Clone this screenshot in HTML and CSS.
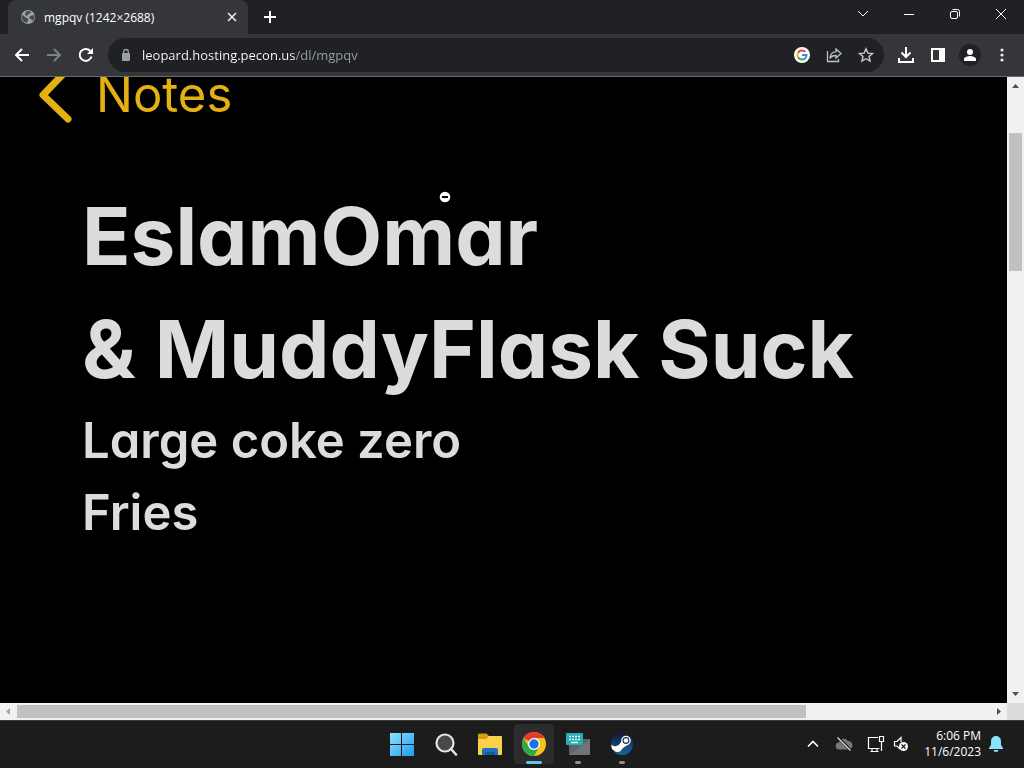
FILE: index.html
```html
<!DOCTYPE html>
<html lang="en">
<head>
  <meta charset="UTF-8">
  <title>mgpqv (1242×2688)</title>
  <link rel="stylesheet" href="styles.css">
</head>
<body>
  <header class="tab-strip">
    <div class="tab">
      <svg class="globe" width="16" height="16" viewBox="0 0 16 16">
        <circle cx="8" cy="8" r="7" fill="#9aa0a6"/>
        <path d="M2 6l2 1 2 2 2 .5v2L6.500 14 3 12 1.500 8zM7 2l4 .5-1 2-2 .5L7 7 5 6l.5-2zM10 7l4-1 .5 3-2 3-1.500-2-2-1z" fill="#45484c"/>
      </svg>
      <span class="tab-title">mgpqv (1242×2688)</span>
      <button class="tab-close" aria-label="Close tab">
        <svg width="10" height="10" viewBox="0 0 10 10"><path d="M1 1l8 8M9 1L1 9" stroke="#e8eaed" stroke-width="1.600"/></svg>
      </button>
    </div>
    <button class="new-tab" aria-label="New tab">
      <svg width="14" height="14" viewBox="0 0 14 14"><path d="M7 1v12M1 7h12" stroke="#fff" stroke-width="2"/></svg>
    </button>
    <div class="window-buttons">
      <button aria-label="Search tabs"><svg width="12" height="12" viewBox="0 0 12 12"><path d="M1 3l5 5 5-5"/></svg></button>
      <button aria-label="Minimize"><svg width="12" height="12" viewBox="0 0 12 12"><path d="M1 6.500h10"/></svg></button>
      <button aria-label="Restore"><svg width="12" height="12" viewBox="0 0 12 12"><rect x="1.500" y="3.500" width="7" height="7" rx="1.500"/><path d="M3.500 1.500H8.500a2 2 0 0 1 2 2V8.500"/></svg></button>
      <button aria-label="Close"><svg width="12" height="12" viewBox="0 0 12 12"><path d="M1 1l10 10M11 1L1 11"/></svg></button>
    </div>
  </header>

  <div class="toolbar">
    <button aria-label="Back"><svg width="16" height="16" viewBox="0 0 16 16"><path d="M15 8H2M8 2L2 8l6 6" fill="none" stroke="#fff" stroke-width="2"/></svg></button>
    <button aria-label="Forward"><svg width="16" height="16" viewBox="0 0 16 16"><path d="M1 8h13M8 2l6 6-6 6" fill="none" stroke="#7d8084" stroke-width="2"/></svg></button>
    <button aria-label="Reload"><svg width="16" height="16" viewBox="0 0 16 16"><path d="M13.500 9.500A6 6 0 1 1 12.300 4" fill="none" stroke="#fff" stroke-width="2"/><path d="M15 1v6H9z" fill="#fff"/></svg></button>
    <div class="omnibox">
      <svg class="lock" width="10" height="14" viewBox="0 0 10 14"><rect x="1" y="5" width="8" height="8" rx="1" fill="#9aa0a6"/><path d="M2.700 6V3.800a2.300 2.300 0 0 1 4.600 0V6" fill="none" stroke="#9aa0a6" stroke-width="1.400"/></svg>
      <input class="url" type="text" aria-label="Address" value="leopard.hosting.pecon.us/dl/mgpqv">
      <button aria-label="Search with Google">
        <svg width="16" height="16" viewBox="0 0 16 16">
          <circle cx="8" cy="8" r="8" fill="#fff"/>
          <g fill="none" stroke-width="2">
            <path d="M4.100 5.700A4.500 4.500 0 0 1 11.300 4.900" stroke="#ea4335"/>
            <path d="M4.100 5.700A4.500 4.500 0 0 0 4.100 10.300" stroke="#fbbc05"/>
            <path d="M4.100 10.300A4.500 4.500 0 0 0 11 11.400" stroke="#34a853"/>
            <path d="M11 11.400A4.500 4.500 0 0 0 12.500 8H8" stroke="#4285f4"/>
          </g>
        </svg>
      </button>
      <button aria-label="Share">
        <svg width="16" height="16" viewBox="0 0 16 16" fill="none" stroke="#bdc1c6" stroke-width="1.300"><path d="M1.500 4v10.500h11V12M10 2l5 4.500-5 4.500V8.500C7 8.500 5 9.500 3.800 11.500 4.200 7.500 6.500 5 10 4.600z"/></svg>
      </button>
      <button aria-label="Bookmark">
        <svg width="16" height="16" viewBox="0 0 16 16"><path d="M8 1.800l1.900 4.300 4.600.4-3.500 3 1.100 4.600L8 11.700l-4.100 2.400L5 9.500l-3.500-3 4.600-.4z" fill="none" stroke="#c8cbcf" stroke-width="1.400"/></svg>
      </button>
    </div>
    <button aria-label="Downloads"><svg width="18" height="18" viewBox="0 0 18 18" fill="none" stroke="#fff" stroke-width="2"><path d="M9 1v9M4.500 6.500L9 11l4.500-4.500M2 12v4h14v-4"/></svg></button>
    <button aria-label="Side panel"><svg width="16" height="16" viewBox="0 0 16 16"><path d="M1 1h14v14H1zM3 3v10h6V3z" fill="#fff" fill-rule="evenodd"/></svg></button>
    <button aria-label="Profile"><svg width="22" height="22" viewBox="0 0 22 22"><circle cx="11" cy="11" r="11" fill="#202124"/><circle cx="11" cy="8" r="3" fill="#fff"/><path d="M5 17v-2c0-2 4-3 6-3s6 1 6 3v2z" fill="#fff"/></svg></button>
    <button aria-label="Menu"><svg width="4" height="14" viewBox="0 0 4 14" fill="#e8eaed"><circle cx="2" cy="2" r="1.600"/><circle cx="2" cy="7" r="1.600"/><circle cx="2" cy="12" r="1.600"/></svg></button>
  </div>

  <div class="viewport">
    <main class="note">
      <a class="back-link" href="#">
        <svg width="36" height="46" viewBox="0 0 36 46"><path d="M30 -8L5 18l25 24" fill="none" stroke="#e3b112" stroke-width="7" stroke-linecap="round" stroke-linejoin="round"/></svg>
        <span>Notes</span>
      </a>
      <h1>EslamOmar<br>&amp; MuddyFlask Suck</h1>
      <p>Large coke zero</p>
      <p>Fries</p>
      <svg class="cursor" width="12" height="12" viewBox="0 0 12 12"><circle cx="6" cy="6" r="5.300" fill="#fff"/><path d="M3 6h6" stroke="#000" stroke-width="2"/></svg>
    </main>
    <div class="scrollbar vertical">
      <svg width="17" height="17" viewBox="0 0 17 17"><path d="M5 11h7L8.500 7z" fill="#505050"/></svg>
      <div class="space-above"></div>
      <div class="thumb"></div>
      <div class="space-below"></div>
      <svg width="17" height="17" viewBox="0 0 17 17"><path d="M5 6h7l-3.500 4z" fill="#505050"/></svg>
    </div>
    <div class="scrollbar horizontal">
      <svg width="17" height="17" viewBox="0 0 17 17"><path d="M10 5v7L6 8.500z" fill="#a3a3a3"/></svg>
      <div class="thumb"></div>
      <div class="space-after"></div>
      <svg width="17" height="17" viewBox="0 0 17 17"><path d="M7 5v7l4-3.500z" fill="#505050"/></svg>
    </div>
    <div class="corner"></div>
  </div>

  <footer class="taskbar">
    <nav class="apps">
      <button aria-label="Start">
        <svg width="24" height="24" viewBox="0 0 24 24">
          <defs><linearGradient id="win" x1="0" y1="0" x2="1" y2="1"><stop offset="0" stop-color="#8fe4fd"/><stop offset="1" stop-color="#1d9bf0"/></linearGradient></defs>
          <path d="M0 1h11v11H0zM12 1h12v11H12zM0 13h11v11H0zM12 13h12v11H12z" fill="url(#win)"/>
        </svg>
      </button>
      <button aria-label="Search">
        <svg width="24" height="24" viewBox="0 0 24 24"><circle cx="11" cy="11" r="8.500" fill="#46484b" stroke="#e4e4e4" stroke-width="2.200"/><path d="M17 17l5 5.500" stroke="#e4e4e4" stroke-width="2.600" stroke-linecap="round"/></svg>
      </button>
      <button aria-label="File Explorer">
        <svg width="24" height="24" viewBox="0 0 24 24">
          <path d="M0 3a1.500 1.500 0 0 1 1.500-1.500h7L11 4v5H0z" fill="#d99a14"/>
          <path d="M0 7h8l3-3h12a1 1 0 0 1 1 1v17a1 1 0 0 1-1 1H1a1 1 0 0 1-1-1z" fill="#fbd04b"/>
          <path d="M4 23v-5a2 2 0 0 1 2-2h12a2 2 0 0 1 2 2v5z" fill="#1a73c4"/>
          <path d="M7 20h10v3H7z" fill="#155a9c"/>
        </svg>
      </button>
      <button class="active running" aria-label="Google Chrome">
        <svg width="24" height="24" viewBox="0 0 24 24">
          <circle cx="12" cy="12" r="12" fill="#fbc116"/>
          <path d="M12 12L1.600 6A12 12 0 0 1 22.400 6H12z" fill="#e33b2e"/>
          <path d="M1.600 6A12 12 0 0 0 12 24l5.200-9L12 12 6.800 15z" fill="#2da94f"/>
          <circle cx="12" cy="12" r="6" fill="#fff"/>
          <circle cx="12" cy="12" r="4.700" fill="#1a73e8"/>
        </svg>
      </button>
      <button class="running" aria-label="Touch keyboard">
        <svg width="26" height="24" viewBox="0 0 26 24">
          <rect x="4" y="7" width="21" height="16" rx="1" fill="#606368"/>
          <path d="M4 23L25 7v15a1 1 0 0 1-1 1z" fill="#707378"/>
          <rect x="1" y="1" width="17" height="12" rx="1" fill="#28acb7"/>
          <path d="M4 4.500h12M4 7.500h12" stroke="#e8ffff" stroke-width="1.600" stroke-dasharray="2 1"/>
          <path d="M6 10.500h7" stroke="#e8ffff" stroke-width="1.400"/>
        </svg>
      </button>
      <button class="running" aria-label="Steam">
        <svg width="24" height="24" viewBox="0 0 24 24">
          <defs><linearGradient id="steam" x1="0" y1="0" x2="0" y2="1"><stop offset="0" stop-color="#10183a"/><stop offset="1" stop-color="#1668a0"/></linearGradient></defs>
          <circle cx="12" cy="12" r="11" fill="url(#steam)"/>
          <path d="M1 13l6 2 5-6 7 3-6 4-3 3.500-4 .5-4-3z" fill="#fff"/>
          <circle cx="16" cy="8.500" r="4.800" fill="#fff"/>
          <circle cx="16" cy="8.500" r="2.900" fill="none" stroke="#1b2d4e" stroke-width="1.100"/>
          <circle cx="8" cy="16.500" r="3" fill="#fff"/>
        </svg>
      </button>
    </nav>
    <div class="tray">
      <button class="tray-more" aria-label="Show hidden icons"><svg width="12" height="12" viewBox="0 0 12 12"><path d="M1 8.500l5-5 5 5" fill="none" stroke="#fff" stroke-width="1.600"/></svg></button>
      <svg class="cloud" width="18" height="16" viewBox="0 0 18 16"><path d="M4.500 13.500a3.500 3.500 0 0 1-.5-7 5 5 0 0 1 9-1.500 4.300 4.300 0 0 1 1 8.500z" fill="#76787a"/><path d="M3 1.500l13 13" stroke="#1c1c1c" stroke-width="3"/><path d="M2.500 1.500l13 13" stroke="#ddd" stroke-width="1.300"/></svg>
      <svg class="network" width="18" height="18" viewBox="0 0 18 18" fill="none" stroke="#fff" stroke-width="1.200"><path d="M11 2.500H1.500v11h11M5 13.500v3M10 13.500v3M3.500 16.500h8M12.500 1.500h4v5h-4zM14.500 6.500V16"/></svg>
      <svg class="sound" width="16" height="16" viewBox="0 0 16 16"><path d="M7 13L4 10H1.500V5.500H4L8 1.500V6" fill="none" stroke="#fff" stroke-width="1.200"/><circle cx="10.500" cy="10.500" r="4.500" fill="#fff"/><path d="M8.500 8.500l4 4M12.500 8.500l-4 4" stroke="#1c1c1c" stroke-width="1.200"/></svg>
      <div class="clock">
        <time>6:06 PM</time>
        <time datetime="2023-11-06">11/6/2023</time>
      </div>
      <svg class="bell" width="14" height="16" viewBox="0 0 14 16"><path d="M7 0a5 5 0 0 1 5 5v4l2 3v1H0v-1l2-3V5a5 5 0 0 1 5-5zM4.500 14h5a2.500 2 0 0 1-5 0z" fill="#8be3fb"/></svg>
    </div>
  </footer>
</body>
</html>
```

FILE: styles.css
```css
* {
  box-sizing: border-box;
}
body {
  margin: 0;
  height: 100vh;
  display: flex;
  flex-direction: column;
  overflow: hidden;
  background: #202124;
  color: #fff;
  font-family: "Open Sans", "Noto Sans", sans-serif;
}
svg {
  display: block;
  flex: none;
}
button {
  display: flex;
  align-items: center;
  justify-content: center;
  padding: 0;
  border: none;
  background: none;
  color: inherit;
}

/* tabs */
.tab-strip {
  display: flex;
  height: 34px;
  padding-left: 8px;
}
.tab {
  display: flex;
  align-items: center;
  width: 240px;
  padding: 0 8px 0 12px;
  border-radius: 8px 8px 0 0;
  background: #35363a;
  font-size: 12px;
}
.tab-title {
  flex: 1;
  margin-left: 8px;
  white-space: nowrap;
}
.tab-close {
  width: 16px;
  height: 16px;
}
.new-tab {
  width: 28px;
  margin-left: 8px;
}
.window-buttons {
  display: flex;
  margin-left: auto;
}
.window-buttons button {
  width: 46px;
  height: 28px;
}
.window-buttons svg {
  fill: none;
  stroke: #fff;
}

/* toolbar */
.toolbar {
  display: flex;
  align-items: center;
  height: 43px;
  padding: 0 6px;
  background: #35363a;
  border-bottom: 1px solid #6b6c6f;
}
.toolbar button {
  width: 32px;
  height: 32px;
}
.omnibox {
  display: flex;
  flex: 1;
  align-items: center;
  height: 34px;
  margin: 0 6px;
  padding: 0 2px 0 13px;
  border-radius: 17px;
  background: #202124;
}
.url {
  flex: 1;
  min-width: 0;
  height: 24px;
  margin-left: 11px;
  padding: 0;
  border: none;
  outline: none;
  background: linear-gradient(to right, #fff 154px, #9aa0a6 154px);
  -webkit-background-clip: text;
  background-clip: text;
  color: transparent;
  font: 13px "Open Sans", "Noto Sans", sans-serif;
}

/* page */
.viewport {
  flex: 1;
  min-height: 0;
  display: grid;
  grid-template-columns: 1fr 17px;
  grid-template-rows: 1fr 17px;
}
.note {
  position: relative;
  min-height: 0;
  overflow: hidden;
  padding-left: 82px;
  background: #000;
  color: #dcdcdc;
  font-family: Inter, sans-serif;
  font-feature-settings: "cv11";
  cursor: zoom-out;
}
.back-link {
  display: flex;
  align-items: flex-start;
  gap: 22px;
  height: 46px;
  margin-left: -44px;
  color: #e3b112;
  font-size: 49px;
  line-height: 36px;
  text-decoration: none;
}
.note h1 {
  margin: 56px 0 0;
  font-size: 80px;
  font-weight: 700;
  line-height: 113px;
  white-space: nowrap;
}
.note p {
  margin: 0;
  font-size: 49px;
  font-weight: 600;
  line-height: 72px;
}
.cursor {
  position: absolute;
  left: 439px;
  top: 114px;
}

.scrollbar {
  display: flex;
  background: #f1f1f1;
}
.vertical {
  flex-direction: column;
}
.thumb {
  background: #c1c1c1;
}
.vertical .thumb {
  flex: 138;
  margin: 0 2px;
}
.horizontal .thumb {
  flex: 789;
  margin: 2px 0;
}
.space-above {
  flex: 39;
}
.space-below {
  flex: 415;
}
.space-after {
  flex: 184;
}
.corner {
  background: #dcdcdc;
}

/* taskbar */
.taskbar {
  display: grid;
  grid-template-columns: 1fr auto 1fr;
  align-items: center;
  height: 48px;
  padding-bottom: 2px;
  background: #1c1c1c;
  border-top: 1px solid #3a3a3a;
}
.apps {
  grid-column: 2;
  display: flex;
  gap: 4px;
}
.apps button {
  position: relative;
  width: 40px;
  height: 40px;
  border-radius: 4px;
}
.apps .active {
  background: #2c2c2c;
}
.running::after {
  content: "";
  position: absolute;
  bottom: 0;
  left: 17px;
  width: 6px;
  height: 3px;
  border-radius: 2px;
  background: #8f8f8f;
}
.active::after {
  left: 12px;
  width: 16px;
  background: #5fbfee;
}
.tray {
  display: flex;
  align-items: center;
  justify-content: flex-end;
  padding-right: 21px;
}
.cloud {
  margin-left: 16px;
}
.network {
  margin-left: 14px;
}
.sound {
  margin-left: 8px;
}
.clock {
  display: flex;
  flex-direction: column;
  margin: 0 8px 0 15px;
  font-size: 12px;
  line-height: 16px;
  text-align: right;
}
```
